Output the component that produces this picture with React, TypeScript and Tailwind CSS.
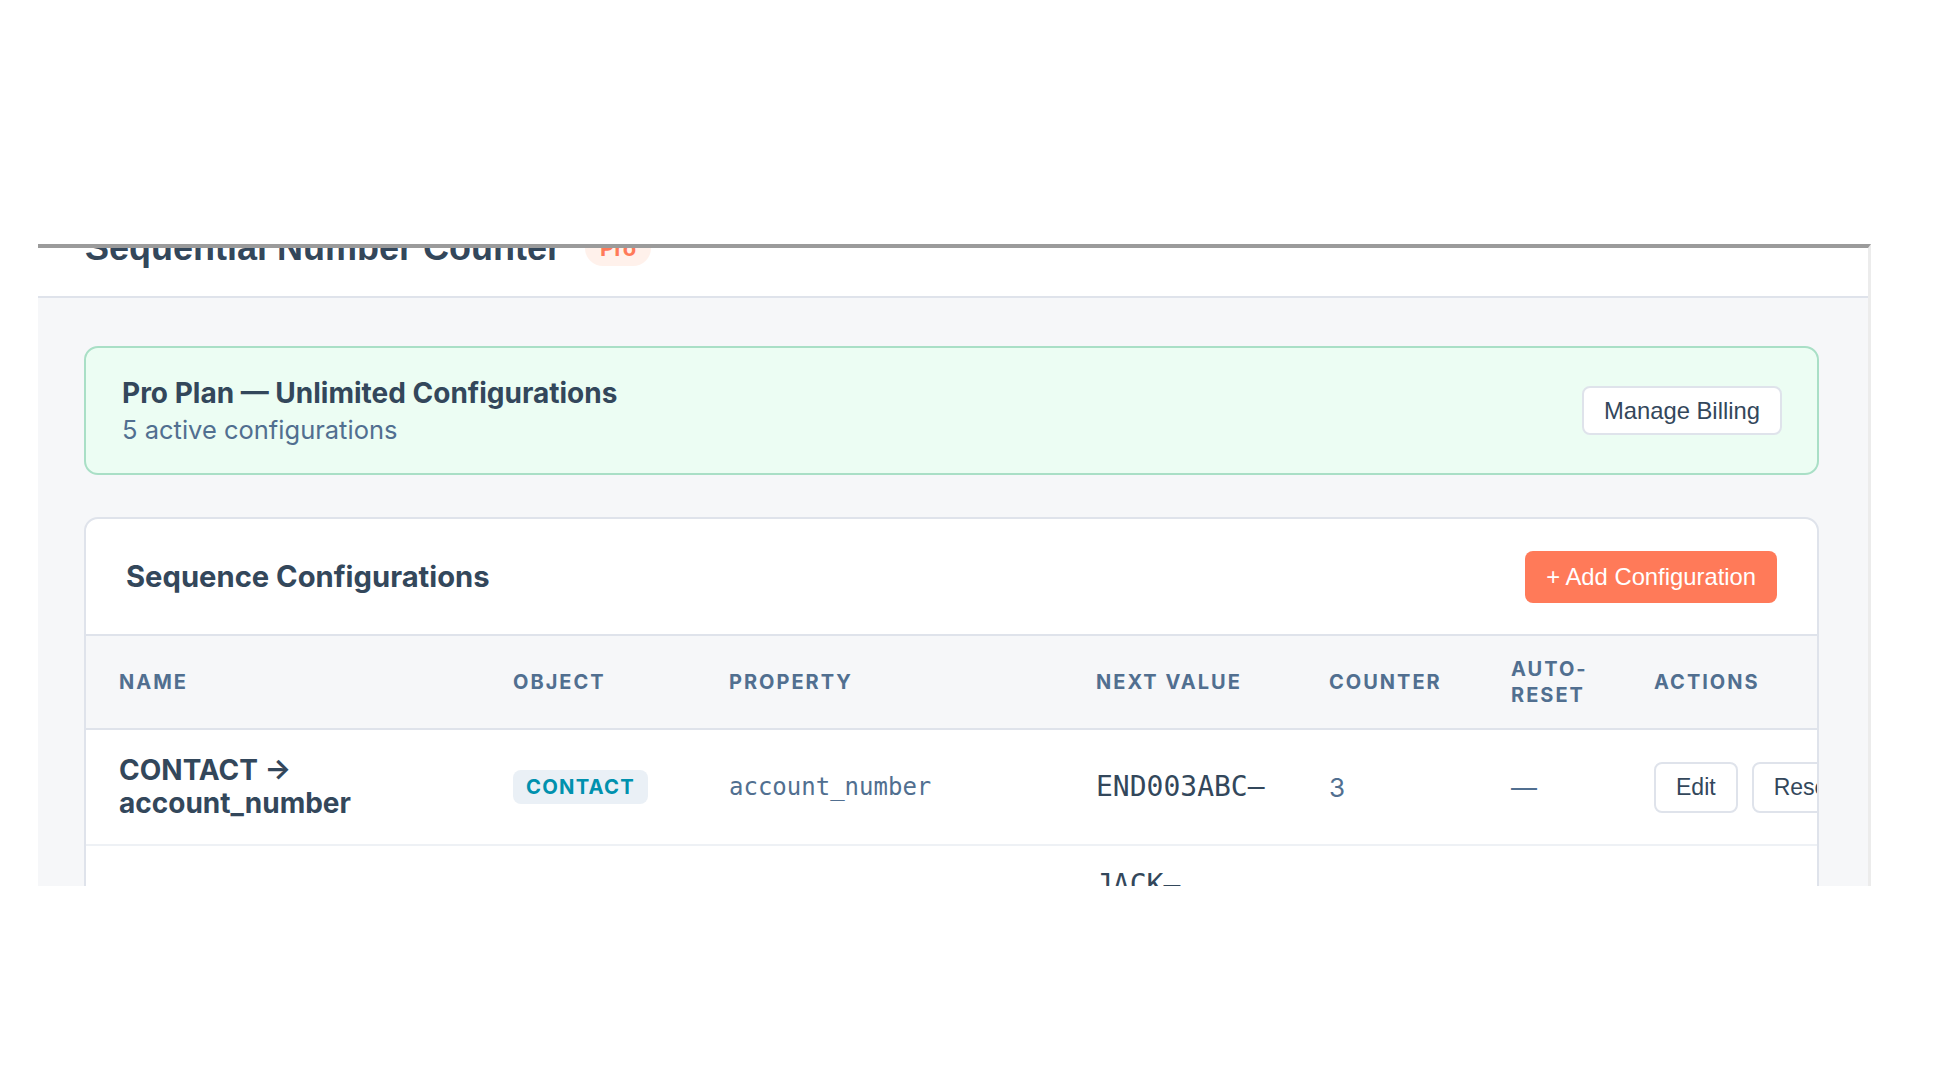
import React from 'react';

type SequenceRow = {
  object: string;
  property: string;
  nextValue: string;
  counter: string;
  autoReset: string;
};

const rows: SequenceRow[] = [
  { object: 'CONTACT', property: 'account_number', nextValue: 'END003ABC—', counter: '3', autoReset: '—' },
  {
    object: 'DEAL',
    property: 'deal_reference_number',
    nextValue: 'JACK—000017INV—QUOTE',
    counter: '17',
    autoReset: 'Yearly',
  },
];

const headers = ['Name', 'Object', 'Property', 'Next Value', 'Counter', 'Auto-Reset', 'Actions'];

// fixed column tracks, the table is wider than the card and gets clipped
const cols = 'grid grid-cols-[394px_216px_367px_233px_182px_143px_280px]';
const helv = "font-['Liberation_Sans',Arial,sans-serif]";
const mono = "font-['DejaVu_Sans_Mono',monospace]";

function SecondaryButton({ children, className = '' }: { children: React.ReactNode; className?: string }) {
  return (
    <button
      className={`${helv} shrink-0 rounded-[8px] border-2 border-[#dfe3eb] bg-white px-[20px] text-[#33475b] ${className}`}
    >
      {children}
    </button>
  );
}

function ConfigRow({ row }: { row: SequenceRow }) {
  return (
    <div className={`${cols} items-center border-b-2 border-[#eef1f5] py-[24px]`}>
      <div className="pr-[40px] pl-[33px] text-[28px] leading-[33px] font-bold text-[#33475b]">
        {row.object} → {row.property}
      </div>
      <div className="pl-[33px]">
        <span className="inline-block rounded-[8px] bg-[#eaf0f6] px-[13px] text-[20.25px] leading-[34px] font-bold tracking-[0.06em] text-[#0091ae]">
          {row.object}
        </span>
      </div>
      <div className={`${mono} pl-[33px] text-[24px] text-[#516f90]`}>{row.property}</div>
      <div className={`${mono} pr-[20px] pl-[33px] text-[28px] leading-[30px] text-[#33475b]`}>{row.nextValue}</div>
      <div className="pl-[33px] text-[26px] text-[#516f90]">{row.counter}</div>
      <div className="pl-[33px] text-[26px] text-[#516f90]">{row.autoReset}</div>
      <div className="flex gap-[14px] pl-[33px]">
        <SecondaryButton className="h-[51px] text-[23px]">Edit</SecondaryButton>
        <SecondaryButton className="h-[51px] text-[23px]">Reset</SecondaryButton>
      </div>
    </div>
  );
}

export default function App() {
  return (
    <div className="min-h-screen bg-white font-['Inter','Noto_Sans',sans-serif]">
      <div className="mt-[244px] ml-[38px] h-[642px] w-[1833px] overflow-hidden border-t-4 border-r-[3px] border-t-[#9b9b9b] border-r-[#ececec] bg-[#f6f7f9]">
        <div className="mt-[-48px]">
          {/* Page header */}
          <header className="flex items-center gap-[24px] border-b-2 border-[#dfe3eb] bg-white pt-[26px] pb-[27px] pl-[47px]">
            <h1 className={`${helv} text-[36px] leading-[43px] font-bold text-[#33475b]`}>Sequential Number Counter</h1>
            <span className="rounded-full bg-[#fff1eb] px-[15px] py-[5px] text-[22px] leading-[26px] font-bold text-[#ff7a59]">
              Pro
            </span>
          </header>

          <main className="pt-[48px] pr-[49px] pl-[46px]">
            {/* Plan banner */}
            <section className="flex h-[129px] items-center justify-between rounded-[14px] border-2 border-[#a9dfc6] bg-[#ecfdf3] pr-[35px] pl-[36px]">
              <div>
                <div className="text-[28px] leading-[34px] font-bold text-[#33475b]">
                  Pro Plan — Unlimited Configurations
                </div>
                <div className="mt-[4px] text-[25.5px] leading-[32px] text-[#516f90]">5 active configurations</div>
              </div>
              <SecondaryButton className="h-[49px] text-[23.8px]">Manage Billing</SecondaryButton>
            </section>

            {/* Configurations table */}
            <section className="mt-[42px] overflow-hidden rounded-[14px] border-2 border-[#dfe3eb] bg-white">
              <div className="flex h-[117px] items-center justify-between border-b-2 border-[#dfe3eb] px-[40px]">
                <h2 className="text-[29.2px] font-bold text-[#33475b]">Sequence Configurations</h2>
                <button className={`${helv} h-[52px] rounded-[8px] bg-[#ff7a59] px-[21px] text-[23.8px] text-white`}>
                  + Add Configuration
                </button>
              </div>

              <div className={`${cols} h-[94px] items-center border-b-2 border-[#dfe3eb] bg-[#f6f7f9]`}>
                {headers.map((h) => (
                  <div
                    key={h}
                    className="pr-[20px] pl-[33px] text-[20px] leading-[26px] font-bold tracking-[0.1em] text-[#516f90] uppercase"
                  >
                    {h}
                  </div>
                ))}
              </div>

              {rows.map((row) => (
                <ConfigRow key={row.property} row={row} />
              ))}
            </section>
          </main>
        </div>
      </div>
    </div>
  );
}
